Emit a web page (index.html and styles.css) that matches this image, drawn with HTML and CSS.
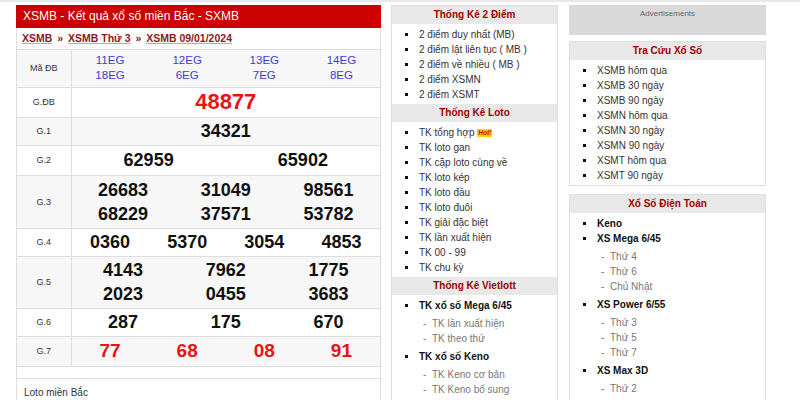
FILE: index.html
```html
<!DOCTYPE html>
<html lang="vi">
<head>
<meta charset="utf-8">
<title>XSMB</title>
<link rel="stylesheet" href="styles.css">
</head>
<body>
<div class="topline"></div>
<div class="page">
  <div class="col-left">
    <div class="kq-box">
      <h1 class="kq-title">XSMB - Kết quả xổ số miền Bắc - SXMB</h1>
      <div class="crumbs"><a href="#">XSMB</a> <span class="sep">»</span> <a href="#">XSMB Thứ 3</a> <span class="sep">»</span> <a href="#">XSMB 09/01/2024</a></div>
      <table class="kq">
        <tr class="r-ma alt"><td class="lbl">Mã ĐB</td><td><div class="nums n4 codes"><span>11EG</span><span>12EG</span><span>13EG</span><span>14EG</span><span>18EG</span><span>6EG</span><span>7EG</span><span>8EG</span></div></td></tr>
        <tr class="r-db"><td class="lbl">G.ĐB</td><td><div class="nums n1 big red"><span>48877</span></div></td></tr>
        <tr class="r-28 alt"><td class="lbl">G.1</td><td><div class="nums n1"><span>34321</span></div></td></tr>
        <tr class="r-30"><td class="lbl">G.2</td><td><div class="nums n2"><span>62959</span><span>65902</span></div></td></tr>
        <tr class="r-53 alt"><td class="lbl">G.3</td><td><div class="nums n3 two"><span>26683</span><span>31049</span><span>98561</span><span>68229</span><span>37571</span><span>53782</span></div></td></tr>
        <tr class="r-28"><td class="lbl">G.4</td><td><div class="nums n4"><span>0360</span><span>5370</span><span>3054</span><span>4853</span></div></td></tr>
        <tr class="r-52 alt"><td class="lbl">G.5</td><td><div class="nums n3 two"><span>4143</span><span>7962</span><span>1775</span><span>2023</span><span>0455</span><span>3683</span></div></td></tr>
        <tr class="r-28"><td class="lbl">G.6</td><td><div class="nums n3"><span>287</span><span>175</span><span>670</span></div></td></tr>
        <tr class="r-30 alt"><td class="lbl">G.7</td><td><div class="nums n4 red g7"><span>77</span><span>68</span><span>08</span><span>91</span></div></td></tr>
      </table>
      <div class="kq-gap"></div>
      <div class="loto-title">Loto miền Bắc</div>
    </div>
  </div>

  <div class="col-mid">
    <div class="side-box">
      <div class="side-head">Thống Kê 2 Điểm</div>
      <ul class="side-list">
        <li>2 điểm duy nhất (MB)</li>
        <li>2 điểm lật liên tục ( MB )</li>
        <li>2 điểm về nhiều ( MB )</li>
        <li>2 điểm XSMN</li>
        <li>2 điểm XSMT</li>
      </ul>
      <div class="side-head">Thống Kê Loto</div>
      <ul class="side-list">
        <li>TK tổng hợp <span class="hot">Hot!</span></li>
        <li>TK loto gan</li>
        <li>TK cặp loto cùng về</li>
        <li>TK loto kép</li>
        <li>TK loto đầu</li>
        <li>TK loto đuôi</li>
        <li>TK giải đặc biệt</li>
        <li>TK lần xuất hiện</li>
        <li>TK 00 - 99</li>
        <li>TK chu kỳ</li>
      </ul>
      <div class="side-head">Thống Kê Vietlott</div>
      <ul class="side-list">
        <li class="strong">TK xổ số Mega 6/45
          <ul class="sub"><li>TK lần xuất hiện</li><li>TK theo thứ</li></ul>
        </li>
        <li class="strong">TK xổ số Keno
          <ul class="sub"><li>TK Keno cơ bản</li><li>TK Keno bổ sung</li></ul>
        </li>
      </ul>
    </div>
  </div>

  <div class="col-right">
    <div class="ads">Advertisements</div>
    <div class="side-box">
      <div class="side-head">Tra Cứu Xổ Số</div>
      <ul class="side-list">
        <li>XSMB hôm qua</li>
        <li>XSMB 30 ngày</li>
        <li>XSMB 90 ngày</li>
        <li>XSMN hôm qua</li>
        <li>XSMN 30 ngày</li>
        <li>XSMN 90 ngày</li>
        <li>XSMT hôm qua</li>
        <li>XSMT 90 ngày</li>
      </ul>
    </div>
    <div class="side-box">
      <div class="side-head">Xổ Số Điện Toán</div>
      <ul class="side-list">
        <li class="strong">Keno</li>
        <li class="strong">XS Mega 6/45
          <ul class="sub"><li>Thứ 4</li><li>Thứ 6</li><li>Chủ Nhật</li></ul>
        </li>
        <li class="strong">XS Power 6/55
          <ul class="sub"><li>Thứ 3</li><li>Thứ 5</li><li>Thứ 7</li></ul>
        </li>
        <li class="strong">XS Max 3D
          <ul class="sub"><li>Thứ 2</li></ul>
        </li>
      </ul>
    </div>
  </div>
</div>
</body>
</html>
```
FILE: styles.css
```css
* { box-sizing: border-box; }
html, body { margin: 0; padding: 0; background: #fff; }
body {
  font-family: "Liberation Sans", Arial, sans-serif;
  font-size: 10px;
  color: #333;
  overflow: hidden;
  height: 400px;
}
.topline { height: 2px; background: #e8e8e8; }
.page {
  display: flex;
  align-items: flex-start;
  padding: 3px 0 0 16px;
}
.col-left { width: 365px; }
.col-mid { width: 167px; margin-left: 10px; }
.col-right { width: 197px; margin-left: 11px; }

/* left result box */
.kq-box {
  border: 1px solid #ddd;
  border-top: none;
  background: #fff;
}
.kq-title {
  margin: 0 -1px;
  height: 23px;
  background: #cc0000;
  color: #fff;
  font-size: 12px;
  font-weight: normal;
  line-height: 23px;
  padding-left: 7px;
}
.crumbs {
  height: 22px;
  line-height: 21px;
  padding-left: 5px;
  font-weight: bold;
  font-size: 10.5px;
  border-bottom: 1px solid #ddd;
  color: #8b1a1a;
}
.crumbs a { color: #8b1a1a; text-decoration: underline; text-decoration-color: #d99; }
.crumbs .sep { margin: 0 2px; }

.kq {
  width: 100%;
  border-collapse: collapse;
  border-style: hidden;
}
.kq td {
  border: 1px solid #ddd;
  padding: 0;
  text-align: center;
}
.kq tr.alt td { background: #f7f7f7; }
.kq td.lbl {
  width: 54px;
  font-size: 9px;
  color: #333;
}
.r-ma td { height: 37px; }
.r-db td { height: 30px; }
.r-28 td { height: 28px; }
.r-30 td { height: 30px; }
.r-53 td { height: 53px; }
.r-52 td { height: 52px; }

.nums {
  display: grid;
  font-size: 18px;
  font-weight: bold;
  color: #111;
  line-height: 22px;
}
.nums.n1 { grid-template-columns: 1fr; }
.nums.n2 { grid-template-columns: 1fr 1fr; }
.nums.n3 { grid-template-columns: 1fr 1fr 1fr; }
.nums.n4 { grid-template-columns: 1fr 1fr 1fr 1fr; }
.nums.two { line-height: 24px; }
.nums.big { font-size: 22px; line-height: 26px; }
.nums.red { color: #ee1111; }
.nums.g7 { font-size: 19px; }
.nums.codes {
  font-size: 11.5px;
  font-weight: normal;
  color: #3c3cd6;
  line-height: 15px;
}

.kq-gap {
  height: 13px;
  border-top: 1px solid #ddd;
  border-bottom: 1px solid #ddd;
}
.loto-title {
  padding: 8px 7px;
  font-size: 10px;
  color: #333;
  height: 40px;
}

/* side boxes */
.side-box {
  border: 1px solid #ddd;
  background: #fff;
  margin-bottom: 8px;
}
.side-head {
  background: #e8e8e8;
  color: #a00000;
  font-weight: bold;
  font-size: 10px;
  text-align: center;
  height: 18px;
  line-height: 18px;
}
.side-list {
  list-style: square;
  margin: 0;
  padding: 3px 0 2px 26px;
  color: #333;
}
.side-list > li {
  line-height: 15px;
  padding-left: 1px;
}
.side-list > li::marker { color: #111; font-size: 10px; }
.side-list > li.strong { font-weight: bold; color: #111; }
.sub {
  list-style: none;
  margin: 3px 0;
  padding: 0 0 0 4px;
}
.sub li {
  font-weight: normal;
  color: #777;
  line-height: 15px;
}
.sub li::before {
  content: "-";
  display: inline-block;
  width: 9px;
  color: #777;
}
.hot {
  display: inline-block;
  background: #ffd200;
  color: #d00;
  font-size: 6.5px;
  font-weight: bold;
  font-style: italic;
  line-height: 8px;
  padding: 0 1px;
  vertical-align: 1px;
}

.ads {
  height: 30px;
  background: #d9d9d9;
  color: #666;
  font-size: 8px;
  text-align: center;
  padding-top: 4px;
  margin-bottom: 6px;
}
```
